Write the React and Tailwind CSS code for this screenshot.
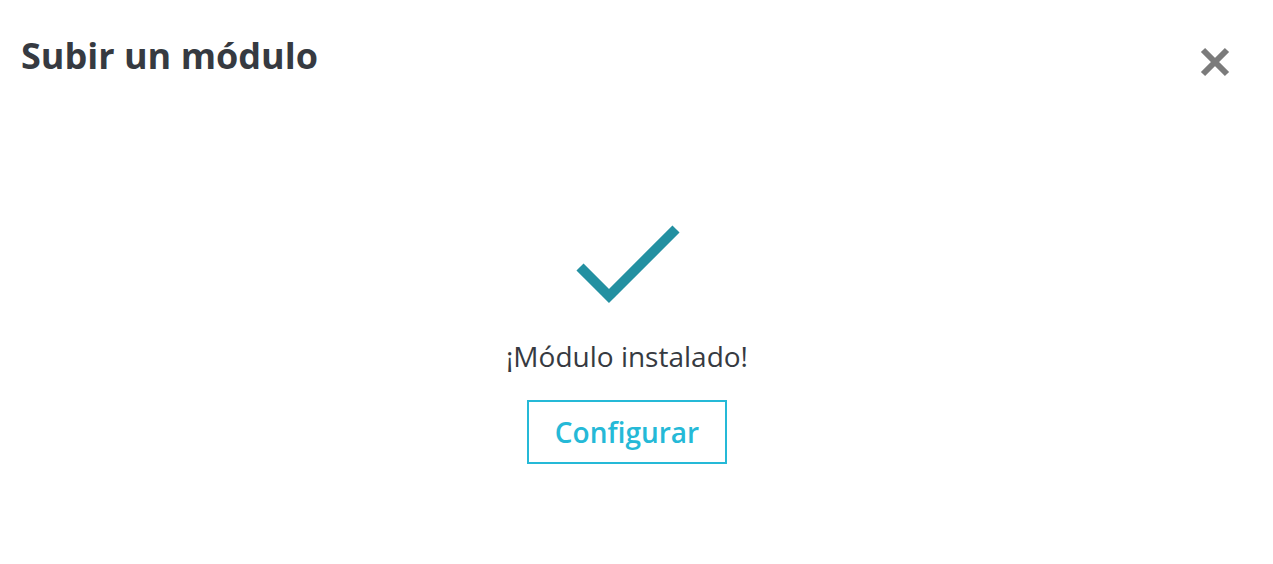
export default function App() {
  return (
    <div className="min-h-screen bg-white font-['Open_Sans',sans-serif] text-[#363a41]">
      <div className="flex items-start justify-between pl-[21px] pr-[42px] pt-[30px]">
        <h1 className="text-[36px] font-bold leading-[52px]">Subir un módulo</h1>
        <button className="mt-[16px] text-[#7b7b7b]" aria-label="Cerrar">
          <svg width="32" height="32" viewBox="0 0 32 32">
            <path d="M4 4 L28 28 M28 4 L4 28" stroke="currentColor" strokeWidth="6" />
          </svg>
        </button>
      </div>
      <div className="flex flex-col items-center pr-[19px] pt-[140px]">
        <svg width="110" height="84" viewBox="0 0 110 84">
          <path d="M8 45 L37 74 L104 7" fill="none" stroke="#2390a1" strokeWidth="10" />
        </svg>
        <p className="mt-[31px] text-[28px] leading-[38px]">¡Módulo instalado!</p>
        <button className="mt-[25px] h-[64px] border-2 border-[#25b9d7] px-[26px] text-[28px] font-semibold text-[#25b9d7]">
          Configurar
        </button>
      </div>
    </div>
  );
}
